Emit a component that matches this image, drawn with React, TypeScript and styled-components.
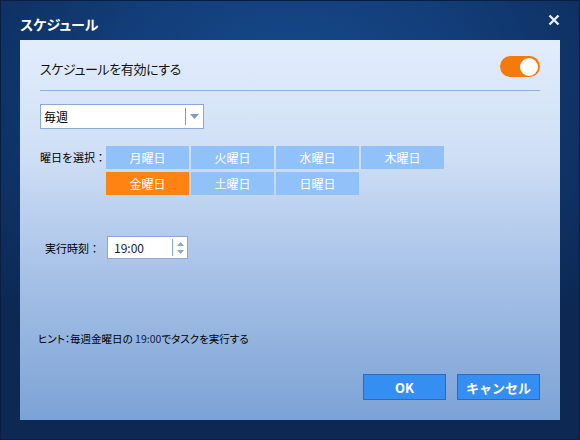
import { FC, useState } from 'react';
import styled, { createGlobalStyle } from 'styled-components';

const GlobalStyle = createGlobalStyle`
  html, body {
    margin: 0;
    padding: 0;
    background: #0c2750;
  }
  body {
    font-family: 'Noto Sans CJK JP', 'Liberation Sans', sans-serif;
  }
`;

const DAYS = ['月曜日', '火曜日', '水曜日', '木曜日', '金曜日', '土曜日', '日曜日'];

const App: FC = () => {
  const [enabled, setEnabled] = useState(true);
  const [selected, setSelected] = useState('金曜日');

  return (
    <>
      <GlobalStyle />
      <Window>
        <TitleBar>
          <Title>スケジュール</Title>
          <CloseButton aria-label="close">
            <svg width="12" height="12" viewBox="0 0 12 12">
              <path d="M1.5 1.5 L10.5 10.5 M10.5 1.5 L1.5 10.5" stroke="#e8eef8" strokeWidth="2.4" />
            </svg>
          </CloseButton>
        </TitleBar>
        <Panel>
          <HeaderRow>
            <HeaderText>スケジュールを有効にする</HeaderText>
            <Toggle $on={enabled} onClick={() => setEnabled(!enabled)}>
              <Knob $on={enabled} />
            </Toggle>
          </HeaderRow>
          <Divider />
          <Select>
            <SelectText>毎週</SelectText>
            <SelectButton>
              <svg width="9" height="5" viewBox="0 0 9 5">
                <path d="M0 0 H9 L4.5 5 Z" fill="#7d9cc8" />
              </svg>
            </SelectButton>
          </Select>
          <DaysRow>
            <FieldLabel>曜日を選択：</FieldLabel>
            <DayGrid>
              {DAYS.map((d) => (
                <DayButton key={d} $active={selected === d} onClick={() => setSelected(d)}>
                  {d}
                </DayButton>
              ))}
            </DayGrid>
          </DaysRow>
          <TimeRow>
            <TimeLabel>実行時刻：</TimeLabel>
            <TimeInput>
              <TimeText>19:00</TimeText>
              <Spinner>
                <svg width="7" height="16" viewBox="0 0 7 16">
                  <path d="M0 6 L3.5 2 L7 6 Z M0 10 H7 L3.5 14 Z" fill="#8aa6cf" />
                </svg>
              </Spinner>
            </TimeInput>
          </TimeRow>
          <Spacer />
          <Hint>
            ヒント：毎週金曜日の <HintTime>19:00</HintTime>でタスクを実行する
          </Hint>
          <Footer>
            <ActionButton>OK</ActionButton>
            <ActionButton>キャンセル</ActionButton>
          </Footer>
        </Panel>
      </Window>
    </>
  );
};

export default App;

const Window = styled.div`
  width: 580px;
  height: 440px;
  box-sizing: border-box;
  padding: 0 20px 20px;
  display: flex;
  flex-direction: column;
  background: radial-gradient(ellipse 70% 70% at 50% 20%, #174a8c 0%, #123d78 45%, #0c2853 100%);
  box-shadow: inset 0 0 0 1px #0a1f40;
`;

const TitleBar = styled.div`
  height: 40px;
  display: flex;
  align-items: center;
  justify-content: space-between;
`;

const Title = styled.div`
  color: #ffffff;
  font-size: 14px;
  font-weight: 700;
  font-feature-settings: 'palt';
  margin-top: 7px;
`;

const CloseButton = styled.div`
  width: 16px;
  height: 16px;
  display: flex;
  align-items: center;
  justify-content: center;
  margin-right: -2px;
`;

const Panel = styled.div`
  flex: 1;
  display: flex;
  flex-direction: column;
  padding: 16px 20px 20px;
  background: linear-gradient(180deg, #e2edfc 0%, #cfdff5 30%, #a9c3e8 60%, #7ca2d5 100%);
`;

const HeaderRow = styled.div`
  display: flex;
  align-items: center;
  justify-content: space-between;
  height: 21px;
`;

const HeaderText = styled.div`
  font-size: 13px;
  font-feature-settings: 'palt';
  letter-spacing: -0.4px;
  color: #111;
  padding-top: 3px;
`;

const Toggle = styled.div<{ $on: boolean }>`
  width: 40px;
  height: 21px;
  border-radius: 11px;
  background: ${(p) => (p.$on ? '#f47a0c' : '#9db4d6')};
  display: flex;
  align-items: center;
  justify-content: ${(p) => (p.$on ? 'flex-end' : 'flex-start')};
  padding: 0 2px;
  box-sizing: border-box;
  cursor: pointer;
`;

const Knob = styled.div<{ $on: boolean }>`
  width: 18px;
  height: 18px;
  border-radius: 50%;
  background: #ffffff;
`;

const Divider = styled.div`
  height: 1px;
  background: #8db2e4;
  margin-top: 13px;
`;

const Select = styled.div`
  margin-top: 13px;
  width: 164px;
  height: 25px;
  box-sizing: border-box;
  border: 1px solid #8aa9d6;
  background: #ffffff;
  display: flex;
  align-items: center;
`;

const SelectText = styled.div`
  flex: 1;
  font-size: 12px;
  padding-left: 3px;
  color: #000;
`;

const SelectButton = styled.div`
  width: 17px;
  height: 17px;
  border-left: 1px solid #7d9cc8;
  display: flex;
  align-items: center;
  justify-content: center;
`;

const DaysRow = styled.div`
  margin-top: 17px;
  display: flex;
  align-items: flex-start;
`;

const FieldLabel = styled.div`
  width: 66px;
  font-size: 11px;
  line-height: 23px;
  color: #000;
`;

const DayGrid = styled.div`
  display: grid;
  grid-template-columns: repeat(4, 83px);
  grid-auto-rows: 23px;
  column-gap: 2px;
  row-gap: 3px;
`;

const DayButton = styled.div<{ $active: boolean }>`
  background: ${(p) => (p.$active ? '#ff8312' : '#91c1f9')};
  color: #ffffff;
  font-size: 12px;
  display: flex;
  align-items: center;
  justify-content: center;
  cursor: pointer;
`;

const TimeRow = styled.div`
  margin-top: 41px;
  display: flex;
  align-items: center;
`;

const TimeLabel = styled.div`
  width: 60px;
  padding-right: 7px;
  text-align: right;
  font-size: 11px;
  color: #000;
`;

const TimeInput = styled.div`
  width: 81px;
  height: 23px;
  box-sizing: border-box;
  border: 1px solid #8aa9d6;
  background: #ffffff;
  display: flex;
  align-items: center;
`;

const TimeText = styled.div`
  flex: 1;
  font-size: 12px;
  padding-left: 6px;
  color: #101a40;
`;

const Spinner = styled.div`
  width: 14px;
  height: 17px;
  border-left: 1px solid #8aa9d6;
  display: flex;
  align-items: center;
  justify-content: center;
`;

const Spacer = styled.div`
  flex: 1;
`;

const Hint = styled.div`
  font-size: 10.5px;
  font-feature-settings: 'palt';
  line-height: 16px;
  color: #000;
  margin-left: -2px;
  margin-bottom: 27px;
`;

const HintTime = styled.span`
  color: #13204a;
`;

const Footer = styled.div`
  display: flex;
  justify-content: flex-end;
  gap: 11px;
`;

const ActionButton = styled.div`
  width: 83px;
  height: 26px;
  box-sizing: border-box;
  border: 1px solid #2a6ac4;
  background: #358ef2;
  color: #ffffff;
  font-size: 13px;
  font-weight: 700;
  display: flex;
  align-items: center;
  justify-content: center;
  cursor: pointer;
`;
